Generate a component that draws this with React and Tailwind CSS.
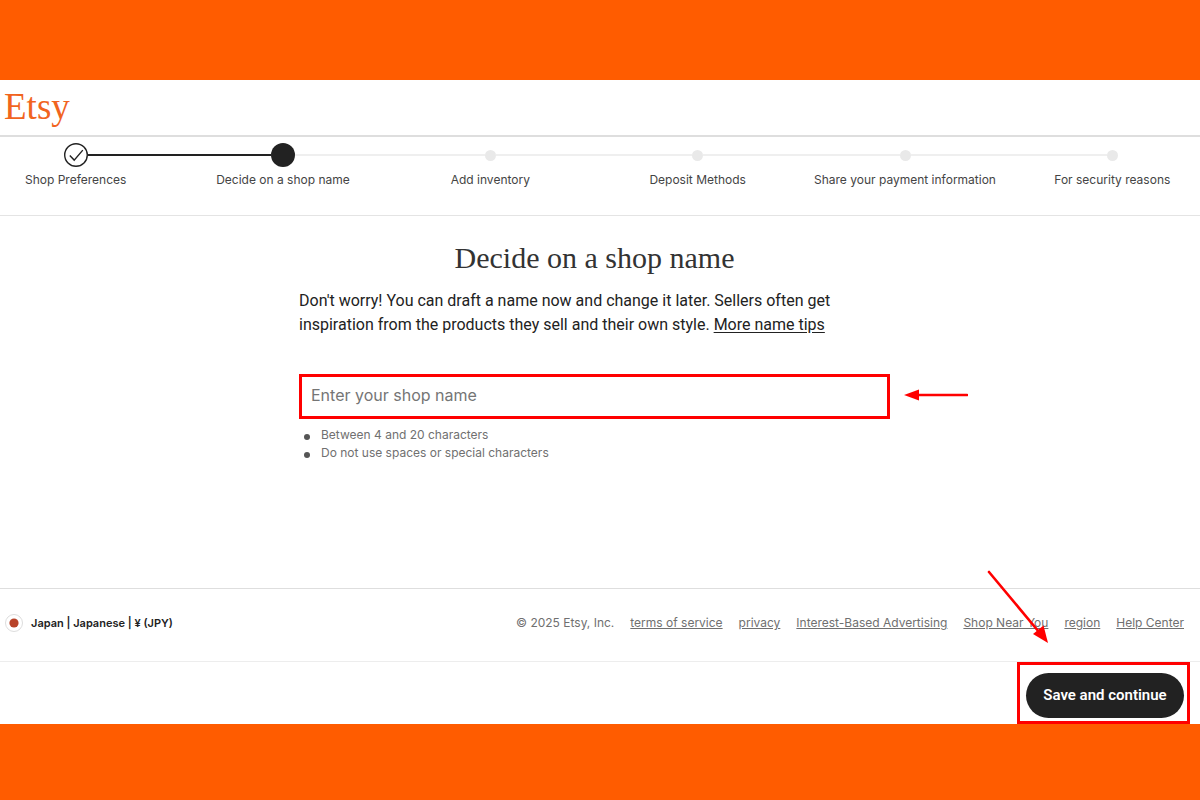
import React, { useState } from 'react';

const steps = [
  { label: 'Shop Preferences', status: 'done' },
  { label: 'Decide on a shop name', status: 'current' },
  { label: 'Add inventory', status: 'todo' },
  { label: 'Deposit Methods', status: 'todo' },
  { label: 'Share your payment information', status: 'todo' },
  { label: 'For security reasons', status: 'todo' },
];

const footerLinks = [
  'terms of service',
  'privacy',
  'Interest-Based Advertising',
  'Shop Near You',
  'region',
  'Help Center',
];

const StepMarker = ({ status }) => {
  if (status === 'done') {
    return (
      <svg viewBox="0 0 24 24" className="w-6 h-6" fill="none" stroke="#222222" aria-hidden="true">
        <circle cx="12" cy="12" r="11.3" strokeWidth="1.4" />
        <path d="M5.800 12.500l4.400 4.600 8.600-10" strokeWidth="1.4" />
      </svg>
    );
  }
  if (status === 'current') {
    return <span className="w-6 h-6 rounded-full bg-[#222222]" />;
  }
  return <span className="w-[11px] h-[11px] rounded-full bg-[#e9e9e9]" />;
};

// Half of the line between two steps
const Connector = ({ hidden, active }) => {
  if (hidden) return <span className="flex-1" />;
  return <span className={active ? 'flex-1 h-[2px] bg-[#222222]' : 'flex-1 h-[2px] bg-[#efefef]'} />;
};

const Stepper = () => (
  <nav aria-label="Progress" className="border-b border-[#e4e4e4] overflow-hidden">
    <ol className="grid grid-cols-6 -ml-7 -mr-4 pt-[6px] pb-[27px]">
      {steps.map((step, index) => (
        <li key={step.label} className="flex flex-col">
          <div className="flex items-center h-6">
            <Connector hidden={index === 0} active={step.status !== 'todo'} />
            <StepMarker status={step.status} />
            <Connector hidden={index === steps.length - 1} active={step.status === 'done'} />
          </div>
          <span className="mt-[5px] text-center text-xs leading-4 text-[#444444]">{step.label}</span>
        </li>
      ))}
    </ol>
  </nav>
);

const App = () => {
  const [shopName, setShopName] = useState('');

  return (
    <div className="min-h-screen flex flex-col bg-white overflow-hidden font-['Inter','Liberation_Sans',sans-serif] text-[#222222]">
      <div className="h-20 bg-[#ff5c00]" />

      <header className="h-[57px] border-b-2 border-[#dedede] px-1 pb-[2px] flex items-center">
        <a href="#" className="font-['Liberation_Serif',serif] text-[37px] leading-10 text-[#f1641e]">Etsy</a>
      </header>

      <Stepper />

      <main className="pt-6 pb-[126px] pr-[11px]">
        <div className="max-w-[591px] mx-auto">
          <h1 className="text-center font-['Liberation_Serif',serif] text-[30px] leading-9 text-[#333333]">Decide on a shop name</h1>
          <p className="mt-[13px] font-['Roboto','Liberation_Sans',sans-serif] text-base leading-6">
            Don't worry! You can draft a name now and change it later. Sellers often get{' '}
            <br />
            inspiration from the products they sell and their own style.{' '}
            <a href="#" className="underline underline-offset-2">More name tips</a>
          </p>

          <div className="relative mt-[37px]">
            <input
              type="text"
              aria-label="Shop name"
              placeholder="Enter your shop name"
              value={shopName}
              onChange={(e) => setShopName(e.target.value)}
              className="block w-full h-[45px] border-3 border-[#ff0000] px-[9px] pb-[3px] text-base placeholder:text-[#757575] outline-none"
            />
            <svg viewBox="0 0 64 12" className="absolute left-full top-[15px] ml-[14px] w-16 h-3" aria-hidden="true">
              <path d="M14 6h49" stroke="#ff0000" strokeWidth="2.600" strokeLinecap="round" />
              <path d="M0 6l15-5.500v11z" fill="#ff0000" />
            </svg>
          </div>

          <ul className="mt-[7px] text-xs leading-[18px] text-[#707070]">
            {['Between 4 and 20 characters', 'Do not use spaces or special characters'].map((rule) => (
              <li key={rule} className="flex items-center pl-[5px] gap-[11px]">
                <span className="w-[6px] h-[6px] mt-1 rounded-full bg-[#555555]" />
                {rule}
              </li>
            ))}
          </ul>
        </div>
      </main>

      <footer className="h-[73px] border-t border-[#dedede] pl-[5px] pr-4 pb-1 flex items-center justify-between leading-4">
        <button type="button" className="flex items-center gap-2 text-[11px] font-semibold">
          <svg viewBox="0 0 18 18" className="w-[18px] h-[18px]" aria-hidden="true">
            <circle cx="9" cy="9" r="8.5" fill="#ffffff" stroke="#dddddd" />
            <circle cx="9" cy="9" r="4.6" fill="#b8432a" />
          </svg>
          Japan | Japanese | ¥ (JPY)
        </button>
        <div className="flex items-center text-xs text-[#707070]">
          <span className="mr-4">© 2025 Etsy, Inc.</span>
          <div className="flex gap-4">
            {footerLinks.map((link) => (
              <a key={link} href="#" className="underline">{link}</a>
            ))}
          </div>
        </div>
      </footer>

      <div className="border-t border-[#ededed] pr-[10px] flex justify-end">
        <div className="relative border-3 border-[#ff0000] pt-2 pb-[3px] pl-[6px] pr-[3px]">
          <button
            type="button"
            className="h-[45px] w-[158px] rounded-full bg-[#222222] text-white font-['Roboto','Liberation_Sans',sans-serif] text-[15px] font-semibold cursor-pointer"
          >
            Save and continue
          </button>
          <svg viewBox="0 0 62 74" className="absolute right-[138px] bottom-full mb-[21px] w-[62px] h-[74px]" aria-hidden="true">
            <path d="M2 2l50 60" stroke="#ff0000" strokeWidth="2.600" strokeLinecap="round" />
            <path d="M61 73l-15-9 10.500-8.500z" fill="#ff0000" />
          </svg>
        </div>
      </div>

      <div className="flex-1 min-h-[76px] bg-[#ff5c00]" />
    </div>
  );
};

export default App;
